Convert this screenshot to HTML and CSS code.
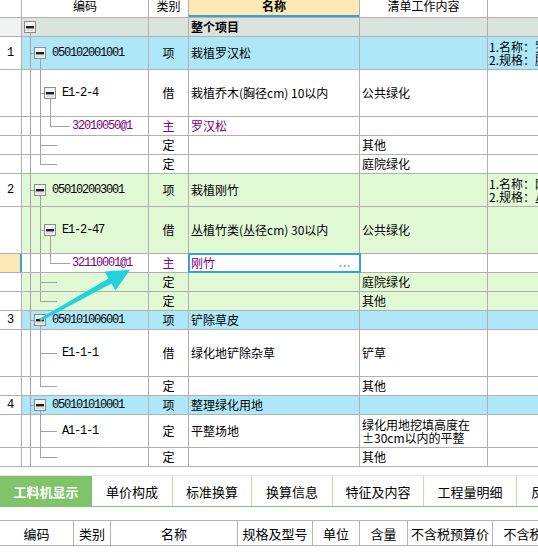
FILE: index.html
```html
<!DOCTYPE html>
<html lang="zh">
<head>
<meta charset="utf-8">
<title>清单</title>
<link rel="stylesheet" href="styles.css">
</head>
<body>
<div class="grid">
  <div class="row head">
    <div class="num"></div>
    <div class="c">编码</div>
    <div class="c">类别</div>
    <div class="c name-h">名称</div>
    <div class="c">清单工作内容</div>
    <div></div>
  </div>

  <div class="row h19 root">
    <div class="num rootnum"></div>
    <div class="code"><i class="v g0 dn"></i><span class="box"></span></div>
    <div></div>
    <div class="txt b">整个项目</div>
    <div></div>
    <div></div>
  </div>

  <div class="row h33 cyan">
    <div class="num">1</div>
    <div class="code"><i class="v g0"></i><i class="h h0"></i><i class="v g1 dn"></i><span class="box l1"></span><span class="id">050102001001</span></div>
    <div class="c">项</div>
    <div class="txt">栽植罗汉松</div>
    <div></div>
    <div class="desc"><span class="lines">1.名称：罗汉松<br>2.规格：胸径10cm以内</span></div>
  </div>

  <div class="row h47">
    <div class="num"></div>
    <div class="code"><i class="v g0"></i><i class="v g1"></i><i class="h h1"></i><i class="v g2 dn"></i><span class="box l2"></span><span class="id">E1-2-4</span></div>
    <div class="c">借</div>
    <div class="txt">栽植乔木(胸径cm) 10以内</div>
    <div class="txt">公共绿化</div>
    <div></div>
  </div>

  <div class="row h19 main">
    <div class="num"></div>
    <div class="code"><i class="v g0"></i><i class="v g1"></i><i class="v g2 up"></i><i class="h hl3"></i><span class="id leaf3">32010050@1</span></div>
    <div class="c">主</div>
    <div class="txt">罗汉松</div>
    <div></div>
    <div></div>
  </div>

  <div class="row h19">
    <div class="num"></div>
    <div class="code"><i class="v g0"></i><i class="v g1"></i><i class="h hl2"></i></div>
    <div class="c">定</div>
    <div></div>
    <div class="txt">其他</div>
    <div></div>
  </div>

  <div class="row h19">
    <div class="num"></div>
    <div class="code"><i class="v g0"></i><i class="v g1 up"></i><i class="h hl2"></i></div>
    <div class="c">定</div>
    <div></div>
    <div class="txt">庭院绿化</div>
    <div></div>
  </div>

  <div class="row h33 green">
    <div class="num">2</div>
    <div class="code"><i class="v g0"></i><i class="h h0"></i><i class="v g1 dn"></i><span class="box l1"></span><span class="id">050102003001</span></div>
    <div class="c">项</div>
    <div class="txt">栽植刚竹</div>
    <div></div>
    <div class="desc"><span class="lines">1.名称：刚竹<br>2.规格：丛径30cm以内</span></div>
  </div>

  <div class="row h47 green">
    <div class="num"></div>
    <div class="code"><i class="v g0"></i><i class="v g1"></i><i class="h h1"></i><i class="v g2 dn"></i><span class="box l2"></span><span class="id">E1-2-47</span></div>
    <div class="c">借</div>
    <div class="txt">丛植竹类(丛径cm) 30以内</div>
    <div class="txt">公共绿化</div>
    <div></div>
  </div>

  <div class="row h19 main">
    <div class="num sel"></div>
    <div class="code"><i class="v g0"></i><i class="v g1"></i><i class="v g2 up"></i><i class="h hl3"></i><span class="id leaf3">32110001@1</span></div>
    <div class="c">主</div>
    <div class="txt edit">刚竹<span class="dots">...</span></div>
    <div></div>
    <div></div>
  </div>

  <div class="row h19 green">
    <div class="num"></div>
    <div class="code"><i class="v g0"></i><i class="v g1"></i><i class="h hl2"></i></div>
    <div class="c">定</div>
    <div></div>
    <div class="txt">庭院绿化</div>
    <div></div>
  </div>

  <div class="row h19 green">
    <div class="num"></div>
    <div class="code"><i class="v g0"></i><i class="v g1 up"></i><i class="h hl2"></i></div>
    <div class="c">定</div>
    <div></div>
    <div class="txt">其他</div>
    <div></div>
  </div>

  <div class="row h19 cyan">
    <div class="num">3</div>
    <div class="code"><i class="v g0"></i><i class="h h0"></i><i class="v g1 dn"></i><span class="box l1"></span><span class="id">050101006001</span></div>
    <div class="c">项</div>
    <div class="txt">铲除草皮</div>
    <div></div>
    <div></div>
  </div>

  <div class="row h47">
    <div class="num"></div>
    <div class="code"><i class="v g0"></i><i class="v g1"></i><i class="h hl2"></i><span class="id leaf2">E1-1-1</span></div>
    <div class="c">借</div>
    <div class="txt">绿化地铲除杂草</div>
    <div class="txt">铲草</div>
    <div></div>
  </div>

  <div class="row h19">
    <div class="num"></div>
    <div class="code"><i class="v g0"></i><i class="v g1 up"></i><i class="h hl2"></i></div>
    <div class="c">定</div>
    <div></div>
    <div class="txt">其他</div>
    <div></div>
  </div>

  <div class="row h19 cyan">
    <div class="num">4</div>
    <div class="code"><i class="v g0"></i><i class="h h0"></i><i class="v g1 dn"></i><span class="box l1"></span><span class="id">050101010001</span></div>
    <div class="c">项</div>
    <div class="txt">整理绿化用地</div>
    <div></div>
    <div></div>
  </div>

  <div class="row h33">
    <div class="num"></div>
    <div class="code"><i class="v g0"></i><i class="v g1"></i><i class="h hl2"></i><span class="id leaf2">A1-1-1</span></div>
    <div class="c">定</div>
    <div class="txt">平整场地</div>
    <div class="txt"><span class="lines">绿化用地挖填高度在<br>±30cm以内的平整</span></div>
    <div></div>
  </div>

  <div class="row h19">
    <div class="num"></div>
    <div class="code"><i class="v g0"></i><i class="v g1 up"></i><i class="h hl2"></i></div>
    <div class="c">定</div>
    <div></div>
    <div class="txt">其他</div>
    <div></div>
  </div>

  <svg class="arrow" width="538" height="467" viewBox="0 0 538 467">
    <polygon points="39.3,318.7 108.5,278.4 104.6,271.4 130.1,269.8 115.4,290.6 111.5,283.6 40.7,321.3" fill="#22d3dc"/>
  </svg>
</div>

<div class="tabs">
  <div class="tab active" style="width:92px">工料机显示</div>
  <div class="tab" style="width:81px">单价构成</div>
  <div class="tab" style="width:79px">标准换算</div>
  <div class="tab" style="width:81px">换算信息</div>
  <div class="tab" style="width:91px">特征及内容</div>
  <div class="tab" style="width:93px">工程量明细</div>
  <div class="tab" style="width:120px">反查图形工程量</div>
</div>

<div class="bhead">
  <div style="width:74px">编码</div>
  <div style="width:37px">类别</div>
  <div style="width:127px">名称</div>
  <div style="width:75px">规格及型号</div>
  <div style="width:47px">单位</div>
  <div style="width:48px">含量</div>
  <div style="width:85px">不含税预算价</div>
  <div style="width:100px">不含税市场价</div>
</div>
</body>
</html>
```

FILE: styles.css
```css
* { box-sizing: border-box; margin: 0; padding: 0; }

html, body { background: #fff; }

body {
  width: 538px;
  height: 554px;
  overflow: hidden;
  font-family: "Noto Sans CJK SC", "Noto Sans", sans-serif;
  font-size: 12px;
  line-height: 12px;
  color: #000;
}

.grid {
  position: relative;
  width: 538px;
  overflow: hidden;
}

.row {
  display: grid;
  grid-template-columns: 22px 127px 40px 171px 128px 120px;
  width: 608px;
  border-bottom: 1px solid #b0b0b0;
}

.row > div {
  border-right: 1px solid #b0b0b0;
  display: flex;
  align-items: center;
  overflow: hidden;
  white-space: nowrap;
}

.h19 { height: 19px; }
.h33 { height: 33px; }
.h47 { height: 47px; }

.head { height: 18px; background: #fff; }
.head > div { align-items: flex-start; line-height: 12px; }
.name-h {
  background: #fde9b3;
  font-weight: bold;
  box-shadow: inset 0 -2px 0 #3ba0d6;
}

.root { background: #dbe3df; }
.cyan { background: #aee8f8; }
.green { background: #e1fad5; }

.num {
  background: #fff;
  justify-content: center;
  font-family: "Liberation Mono", monospace;
  font-size: 12px;
}
.rootnum { background: #f1f3f2; }
.num.sel {
  background: #fde9b3;
  border-right: 2px solid #3ba0d6 !important;
}

.c { justify-content: center; }
.txt { padding-left: 2px; }
.b { font-weight: bold; }
.desc { padding-left: 1px; }
.lines { display: block; white-space: nowrap; line-height: 13px; }

.main { color: #800080; }

.edit {
  position: relative;
  z-index: 2;
  background: #fff;
  outline: 2px solid #3ba0d6;
  outline-offset: -1px;
}
.dots {
  margin-left: auto;
  margin-right: 8px;
  color: #5b9bd2;
  font-family: "Liberation Sans", sans-serif;
  font-weight: bold;
  font-size: 11px;
  letter-spacing: 1px;
}

/* tree column */
.code {
  position: relative;
  padding-left: 2px;
}
.v {
  position: absolute;
  top: 0;
  bottom: 0;
  width: 1px;
  background: #a2a2a2;
}
.v.dn { top: 50%; }
.v.up { bottom: 50%; }
.g0 { left: 8px; }
.g1 { left: 18px; }
.g2 { left: 28px; }

.h {
  position: absolute;
  top: 50%;
  height: 1px;
  background: #a2a2a2;
}
.h0 { left: 8px; width: 4px; }
.h1 { left: 18px; width: 4px; }
.hl2 { left: 18px; width: 17px; }
.hl3 { left: 28px; width: 20px; }

.box {
  position: relative;
  z-index: 1;
  flex: none;
  width: 12px;
  height: 12px;
  border: 1px solid #8c8c8c;
  background: linear-gradient(#ffffff, #d6d6d6);
  box-shadow: inset 0 0 0 1px #f4f4f4;
}
.box::after {
  content: "";
  position: absolute;
  left: 1px;
  right: 1px;
  top: 4px;
  height: 2px;
  background: #1e1e1e;
  box-shadow: 0 1px 0 #9a9a9a;
}
.l1 { margin-left: 10px; }
.l2 { margin-left: 20px; }

.id {
  font-family: "Liberation Mono", monospace;
  font-size: 12px;
  letter-spacing: -1.2px;
  margin-left: 6px;
}
.leaf2 { margin-left: 38px; }
.leaf3 { margin-left: 48px; }

.arrow {
  position: absolute;
  left: 0;
  top: 0;
  pointer-events: none;
  z-index: 3;
}

/* tabs */
.tabs {
  display: flex;
  width: 538px;
  overflow: hidden;
  height: 32px;
  margin-top: 8px;
  border-top: 1px solid #e4e4e4;
  border-bottom: 1px solid #7fc46b;
}
.tab {
  flex: none;
  display: flex;
  align-items: center;
  justify-content: center;
  white-space: nowrap;
  font-size: 13px;
  line-height: 13px;
  border-right: 1px solid #bfe5ad;
  background: #fff;
}
.tab.active {
  background: #7fc46b;
  color: #fff;
  font-weight: bold;
  border-right: none;
}

/* bottom header */
.bhead {
  display: flex;
  width: 538px;
  overflow: hidden;
  height: 26px;
  margin-top: 13px;
  border-top: 1px solid #b4b4b4;
  border-bottom: 1px solid #b4b4b4;
}
.bhead > div {
  flex: none;
  display: flex;
  align-items: center;
  justify-content: center;
  white-space: nowrap;
  font-size: 13px;
  line-height: 13px;
  border-right: 1px solid #b4b4b4;
}
```
